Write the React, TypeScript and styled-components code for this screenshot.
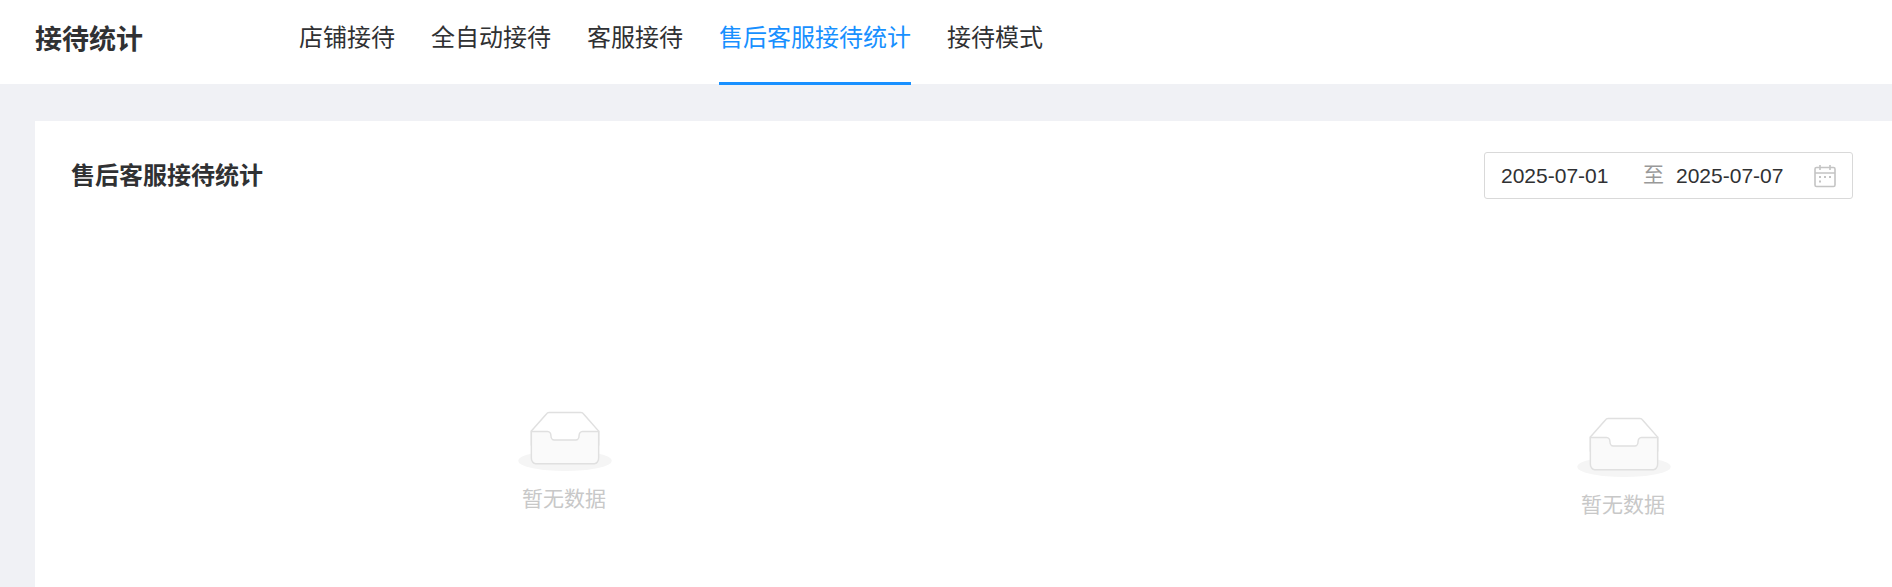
import styled, { createGlobalStyle } from 'styled-components';

const TABS = ['店铺接待', '全自动接待', '客服接待', '售后客服接待统计', '接待模式'];
const ACTIVE_TAB = '售后客服接待统计';

const GlobalStyle = createGlobalStyle`
  html, body {
    margin: 0;
    padding: 0;
    height: 100%;
    overflow: hidden;
    background: #f0f1f5;
    font-family: "Liberation Sans", "Noto Sans CJK SC", sans-serif;
    color: #303133;
  }
`;

const Header = styled.header`
  display: flex;
  height: 84px;
  padding-left: 35px;
  background: #fff;
`;

const PageTitle = styled.h1`
  width: 263px;
  margin: 0;
  font-size: 27px;
  font-weight: 700;
  line-height: 80px;
  color: #303133;
`;

const Nav = styled.nav`
  display: flex;
  gap: 36px;
  padding-left: 1px;
`;

const Tab = styled.a<{ $active?: boolean }>`
  position: relative;
  display: block;
  height: 84px;
  font-size: 24px;
  line-height: 76px;
  color: ${p => (p.$active ? '#1890ff' : '#303133')};

  ${p =>
    p.$active &&
    `
    &::after {
      content: '';
      position: absolute;
      left: 0;
      right: 0;
      bottom: -1px;
      height: 3px;
      background: #1890ff;
    }
  `}
`;

const Card = styled.main`
  margin: 37px 0 0 35px;
  height: 466px;
  background: #fff;
`;

const CardHead = styled.div`
  display: flex;
  justify-content: space-between;
  align-items: center;
  padding: 31px 39px 0 36px;
`;

const CardTitle = styled.h2`
  margin: 0;
  font-size: 24px;
  font-weight: 700;
  line-height: 47px;
  color: #303133;
`;

const DateRange = styled.div`
  box-sizing: border-box;
  display: flex;
  align-items: center;
  width: 369px;
  height: 47px;
  padding-left: 16px;
  border: 1px solid #d9d9d9;
  border-radius: 3px;
  font-size: 21px;
  color: #303133;
`;

const DateValue = styled.span`
  width: 142px;
  white-space: nowrap;
`;

const DateSep = styled.span`
  width: 33px;
  font-size: 21px;
  line-height: 21px;
  margin-top: -3px;
  color: #999;
`;

const DateEnd = styled.span`
  width: 137px;
  white-space: nowrap;
`;

const CalendarIcon = styled.svg`
  flex: none;
  width: 24px;
  height: 24px;
  color: #c4c4c4;
`;

const Charts = styled.div`
  display: grid;
  grid-template-columns: 988px 458px;
  column-gap: 336px;
  padding-left: 36px;
`;

const Empty = styled.div<{ $top: number }>`
  display: flex;
  flex-direction: column;
  align-items: center;
  padding-top: ${p => p.$top}px;
  font-size: 21px;
  line-height: 30px;
  color: #c8c8c8;
`;

const EmptyImage = styled.svg`
  display: block;
  width: 94px;
  height: 60px;
  margin-bottom: 13px;
`;

const EmptyText = styled.span`
  padding-right: 2px;
`;

const EmptyState = ({ top }: { top: number }) => (
  <Empty $top={top}>
    <EmptyImage viewBox="0 0 64 41">
      <g transform="translate(0 1)" fill="none" fillRule="evenodd">
        <ellipse fill="#f5f5f5" cx="32" cy="33" rx="32" ry="7" />
        <g fillRule="nonzero" stroke="#e0e0e0">
          <path d="M55 12.76L44.854 1.258C44.367.474 43.656 0 42.907 0H21.093c-.749 0-1.46.474-1.947 1.257L9 12.761V22h46v-9.24z" />
          <path
            d="M41.613 15.931c0-1.605.994-2.93 2.227-2.931H55v18.137C55 33.26 53.68 35 52.05 35h-40.1C10.32 35 9 33.259 9 31.137V13h11.16c1.233 0 2.227 1.323 2.227 2.928v.022c0 1.605 1.005 2.901 2.237 2.901h14.752c1.232 0 2.237-1.308 2.237-2.913v-.007z"
            fill="#fafafa"
          />
        </g>
      </g>
    </EmptyImage>
    <EmptyText>暂无数据</EmptyText>
  </Empty>
);

const App = () => (
  <>
    <GlobalStyle />
    <Header>
      <PageTitle>接待统计</PageTitle>
      <Nav>
        {TABS.map(tab => (
          <Tab key={tab} $active={tab === ACTIVE_TAB}>
            {tab}
          </Tab>
        ))}
      </Nav>
    </Header>
    <Card>
      <CardHead>
        <CardTitle>售后客服接待统计</CardTitle>
        <DateRange>
          <DateValue>2025-07-01</DateValue>
          <DateSep>至</DateSep>
          <DateEnd>2025-07-07</DateEnd>
          <CalendarIcon viewBox="0 0 24 24" fill="none" stroke="currentColor" strokeWidth="1.6">
            <rect x="2" y="3.5" width="20" height="19" rx="1.5" />
            <path d="M2 9h20M7 1v5M17 1v5" />
            <path d="M6 13h2M11 13h2M16 13h2M6 17.5h2" strokeWidth="1.8" />
          </CalendarIcon>
        </DateRange>
      </CardHead>
      <Charts>
        <EmptyState top={212} />
        <EmptyState top={218} />
      </Charts>
    </Card>
  </>
);

export default App;
